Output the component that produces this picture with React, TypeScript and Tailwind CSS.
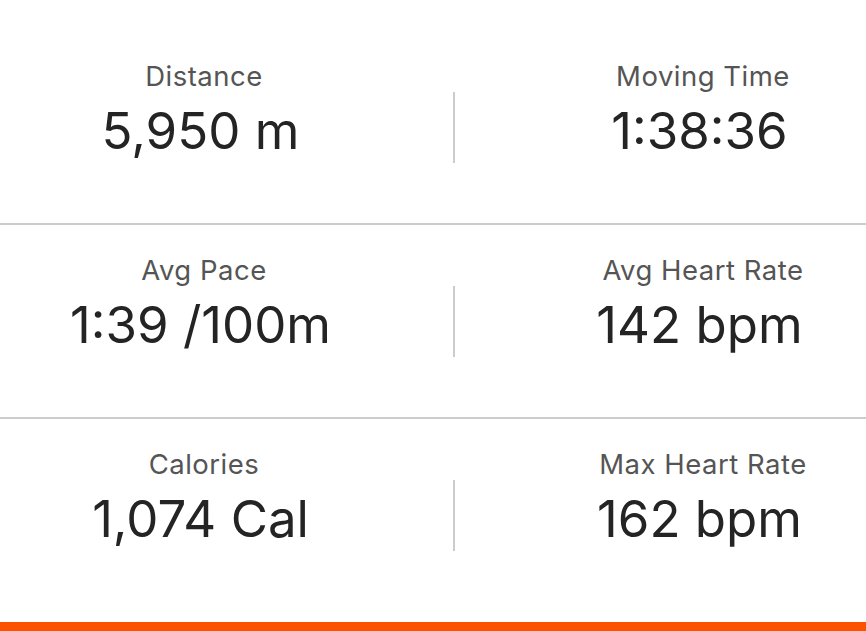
import React from "react";

const rows: [string, string, string, string][] = [
  ["Distance", "5,950 m", "Moving Time", "1:38:36"],
  ["Avg Pace", "1:39 /100m", "Avg Heart Rate", "142 bpm"],
  ["Calories", "1,074 Cal", "Max Heart Rate", "162 bpm"],
];

function Stat({ label, value }: { label: string; value: string }) {
  return (
    <div className="flex flex-col items-center">
      <div className="text-[27.5px] leading-[32px] tracking-[0.5px] text-[#555555]">{label}</div>
      <div className="mt-[11px] mr-[7px] text-[51px] leading-[56px] text-[#242424]">{value}</div>
    </div>
  );
}

export default function App() {
  return (
    <div
      className="w-[866px] h-[631px] bg-white overflow-hidden flex flex-col"
      style={{ fontFamily: "Inter, 'Noto Sans', sans-serif" }}
    >
      <div className="h-[31px]" />
      {rows.map((r, i) => (
        <div
          key={i}
          className={
            i < 2
              ? "relative flex h-[194px] items-center border-b-2 border-[#cccccc]"
              : "relative flex h-[192px] items-center"
          }
        >
          <div className="w-[408px] self-start pt-[29px]">
            <Stat label={r[0]} value={r[1]} />
          </div>
          <div className="ml-[45px] w-[2px] h-[71px] bg-[#cccccc]" />
          <div className="flex-1 self-start pt-[29px] pl-[85px]">
            <Stat label={r[2]} value={r[3]} />
          </div>
        </div>
      ))}
      <div className="h-[11px]" />
      <div className="h-[9px] bg-[#fc5200]" />
    </div>
  );
}
